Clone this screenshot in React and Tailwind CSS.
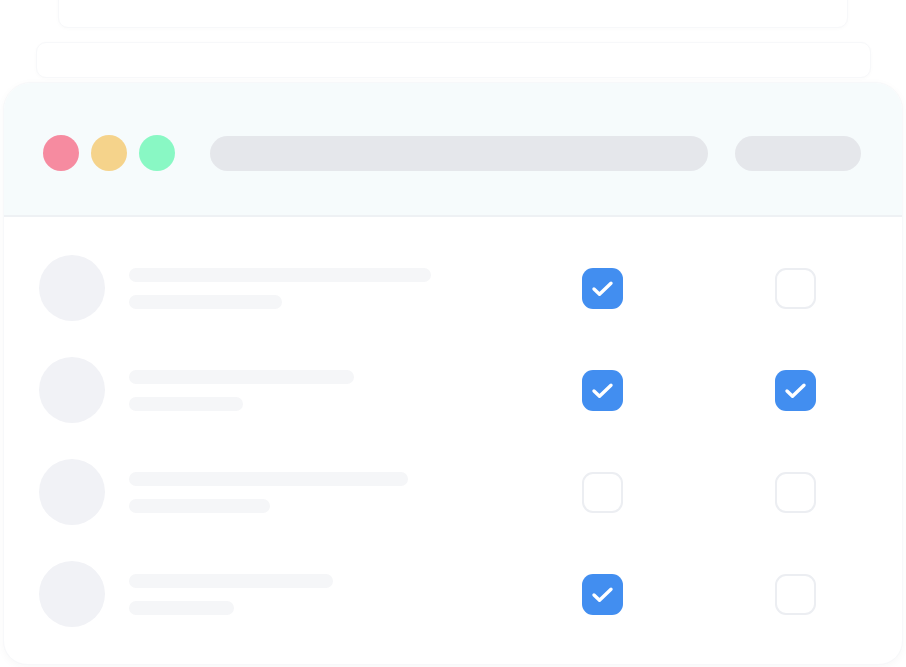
import React from "react";

const rows = [
  { w1: 302, w2: 153, a: true, b: false },
  { w1: 225, w2: 114, a: true, b: true },
  { w1: 279, w2: 141, a: false, b: false },
  { w1: 204, w2: 105, a: true, b: false },
];

const Check = ({ on }) =>
  on ? (
    <div className="h-[41px] w-[41px] rounded-[11px] bg-[#428ef0]">
      <svg width="41" height="41" viewBox="0 0 41 41" fill="none">
        <path d="M12 21l5.5 5.2L29 15.2" stroke="#fff" strokeWidth="3.4" strokeLinecap="round" strokeLinejoin="round" />
      </svg>
    </div>
  ) : (
    <div className="h-[41px] w-[41px] rounded-[11px] border-2 border-[#eceef2] bg-white" />
  );

export default function App() {
  return (
    <div className="flex h-[667px] w-[906px] flex-col items-center overflow-hidden bg-white">
      {/* stacked cards behind */}
      <div className="-mt-[8px] h-[36px] w-[790px] rounded-b-[10px] border border-[#f7f8fa] bg-white shadow-[0_1px_4px_rgba(15,23,42,0.02)]" />
      <div className="mt-[14px] h-[36px] w-[835px] rounded-[10px] border border-[#f7f8fa] bg-white shadow-[0_1px_4px_rgba(15,23,42,0.02)]" />

      {/* main window */}
      <div className="mt-[4px] w-[900px] flex-1 overflow-hidden rounded-t-[28px] rounded-b-[24px] border border-[#f7f8fa] bg-white shadow-[0_2px_8px_rgba(15,23,42,0.03)]">
        {/* header */}
        <div className="flex items-center border-b-2 border-[#eef1f4] bg-[#f6fbfc] pb-[44px] pl-[39px] pr-[41px] pt-[52px]">
          <div className="flex gap-[12px]">
            <div className="h-[36px] w-[36px] rounded-full bg-[#f68ba0]" />
            <div className="h-[36px] w-[36px] rounded-full bg-[#f5d38b]" />
            <div className="h-[36px] w-[36px] rounded-full bg-[#89f8c4]" />
          </div>
          <div className="ml-[35px] h-[35px] flex-1 rounded-full bg-[#e5e7eb]" />
          <div className="ml-[27px] h-[35px] w-[126px] rounded-full bg-[#e5e7eb]" />
        </div>

        {/* rows */}
        <div className="flex flex-col gap-[36px] pl-[35px] pr-[86px] pt-[38px]">
          {rows.map((r, i) => (
            <div key={i} className="flex h-[66px] items-center">
              <div className="h-[66px] w-[66px] rounded-full bg-[#f1f2f6]" />
              <div className="ml-[24px] flex flex-1 flex-col gap-[13px]">
                <div className="h-[14px] rounded-full bg-[#f5f6f8]" style={{ width: r.w1 }} />
                <div className="h-[14px] rounded-full bg-[#f5f6f8]" style={{ width: r.w2 }} />
              </div>
              <div className="flex gap-[152px]">
                <Check on={r.a} />
                <Check on={r.b} />
              </div>
            </div>
          ))}
        </div>
      </div>
      <div className="h-[2px]" />
    </div>
  );
}
